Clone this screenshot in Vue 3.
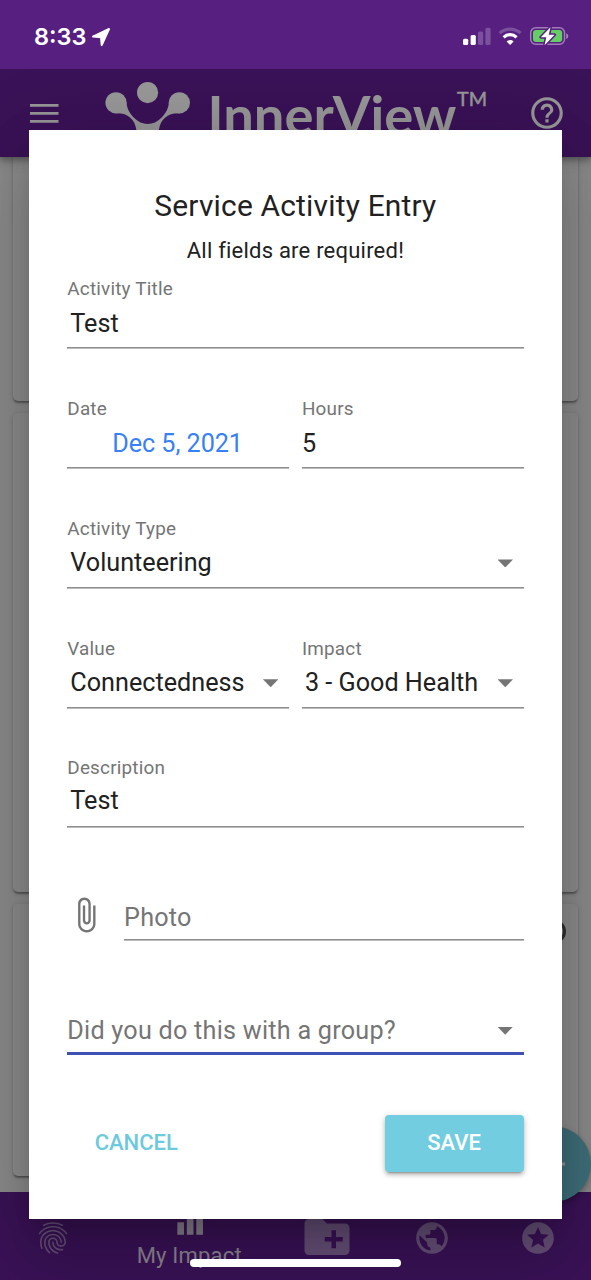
<script setup>
const tabs = [
  { id: 'me', size: 38, path: 'M17.81 4.47c-.08 0-.16-.02-.23-.06C15.66 3.42 14 3 12.01 3c-1.98 0-3.86.47-5.57 1.41-.24.13-.54.04-.68-.2-.13-.24-.04-.55.2-.68C7.82 2.52 9.86 2 12.01 2c2.13 0 3.99.47 6.03 1.52.25.13.34.43.21.67-.09.18-.26.28-.44.28zM3.5 9.72c-.1 0-.2-.03-.29-.09-.23-.16-.28-.47-.12-.7.99-1.4 2.25-2.5 3.75-3.27C9.98 4.04 14 4.03 17.15 5.65c1.5.77 2.76 1.86 3.75 3.25.16.22.11.54-.12.7-.23.16-.54.11-.7-.12-.9-1.26-2.04-2.25-3.39-2.94-2.87-1.47-6.54-1.47-9.4.01-1.36.7-2.5 1.7-3.4 2.96-.08.14-.23.21-.39.21zm6.25 12.07c-.13 0-.26-.05-.35-.15-.87-.87-1.34-1.43-2.01-2.64-.69-1.23-1.05-2.73-1.05-4.34 0-2.97 2.54-5.39 5.66-5.39s5.66 2.42 5.66 5.39c0 .28-.22.5-.5.5s-.5-.22-.5-.5c0-2.42-2.09-4.39-4.66-4.39-2.57 0-4.66 1.97-4.66 4.39 0 1.44.32 2.77.93 3.85.64 1.15 1.08 1.64 1.85 2.42.19.2.19.51 0 .71-.11.1-.24.15-.37.15zm7.17-1.85c-1.19 0-2.24-.3-3.1-.89-1.49-1.01-2.38-2.65-2.38-4.39 0-.28.22-.5.5-.5s.5.22.5.5c0 1.41.72 2.74 1.94 3.56.71.48 1.54.71 2.54.71.24 0 .64-.03 1.04-.1.27-.05.53.13.58.41.05.27-.13.53-.41.58-.57.11-1.07.12-1.21.12zM14.91 22c-.04 0-.09-.01-.13-.02-1.59-.44-2.63-1.03-3.72-2.1-1.4-1.39-2.17-3.24-2.17-5.22 0-1.62 1.38-2.94 3.08-2.94 1.7 0 3.08 1.32 3.08 2.94 0 1.07.93 1.94 2.08 1.94s2.08-.87 2.08-1.94c0-3.77-3.25-6.83-7.25-6.83-2.84 0-5.44 1.58-6.61 4.03-.39.81-.59 1.76-.59 2.8 0 .78.07 2.01.67 3.61.1.26-.03.55-.29.64-.26.1-.55-.04-.64-.29-.49-1.31-.73-2.61-.73-3.96 0-1.2.23-2.29.68-3.24 1.33-2.79 4.28-4.6 7.51-4.6 4.55 0 8.25 3.51 8.25 7.83 0 1.62-1.38 2.94-3.08 2.94s-3.08-1.32-3.08-2.94c0-1.07-.93-1.94-2.08-1.94s-2.08.87-2.08 1.94c0 1.71.66 3.31 1.87 4.51.95.94 1.86 1.46 3.27 1.85.27.07.42.35.35.61-.05.23-.26.38-.47.38z' },
  { id: 'impact', size: 38, label: 'My Impact', path: 'M4 12.2h4.2v7.8H4zM10 4h4.2v16H10zM16 8h4.2v12H16z' },
  { id: 'add', size: 54, path: 'M20 6h-8l-2-2H4c-1.11 0-1.99.89-1.99 2L2 18c0 1.11.89 2 2 2h16c1.11 0 2-.89 2-2V8c0-1.11-.89-2-2-2zm-1 8h-3v3h-2v-3h-3v-2h3V9h2v3h3v2z' },
  { id: 'world', size: 38, path: 'M12 2C6.48 2 2 6.48 2 12s4.48 10 10 10 10-4.48 10-10S17.52 2 12 2zm-1 17.93c-3.95-.49-7-3.85-7-7.93 0-.62.08-1.21.21-1.79L9 15v1c0 1.1.9 2 2 2v1.93zm6.9-2.54c-.26-.81-1-1.39-1.9-1.39h-1v-3c0-.55-.45-1-1-1H8v-2h2c.55 0 1-.45 1-1V7h2c1.1 0 2-.9 2-2v-.41c2.93 1.19 5 4.06 5 7.41 0 2.08-.8 3.97-2.1 5.39z' },
  { id: 'stars', size: 38, path: 'M11.99 2C6.47 2 2 6.48 2 12s4.47 10 9.99 10C17.52 22 22 17.52 22 12S17.52 2 11.99 2zm4.24 16L12 15.45 7.77 18l1.12-4.81-3.73-3.23 4.92-.42L12 5l1.92 4.53 4.92.42-3.73 3.23L16.23 18z' },
]
const rows = [
  [{ label: 'Activity Title', value: 'Test', kind: 'padded' }],
  [{ label: 'Date', value: 'Dec 5, 2021', kind: 'date' }, { label: 'Hours', value: '5', kind: 'plain' }],
  [{ label: 'Activity Type', value: 'Volunteering', kind: 'padded', select: true }],
  [{ label: 'Value', value: 'Connectedness', kind: 'padded', select: true }, { label: 'Impact', value: '3 - Good Health', kind: 'padded', select: true }],
  [{ label: 'Description', value: 'Test', kind: 'padded area' }],
]
</script>

<template>
  <div class="screen">
    <div class="status">
      <div class="time">
        <span>8:33</span>
        <svg width="20" height="20" viewBox="0 0 20 20"><path d="M18 2 10.700 18.200 10 10.200 2 9.600Z" fill="#fff" stroke="#fff" stroke-width="2" stroke-linejoin="round" /></svg>
      </div>
      <svg class="indicators" width="108" height="22" viewBox="462 26 108 22">
        <g fill="#fff">
          <rect x="463" y="38.7" width="5.2" height="6.3" rx="1.5" />
          <rect x="470.6" y="35" width="5.2" height="10" rx="1.5" />
          <rect x="478" y="31.5" width="5.2" height="13.5" rx="1.5" opacity=".22" />
          <rect x="485.4" y="27.8" width="5.2" height="17.2" rx="1.5" opacity=".22" />
        </g>
        <g fill="none" stroke="#fff" stroke-width="3.2">
          <path d="M499.6 33.2A15.4 15.4 0 0 1 520.6 33.2" opacity=".22" />
          <path d="M503.6 37.3A9.4 9.4 0 0 1 516.6 37.3" />
        </g>
        <path d="M510.1 45 506.6 41.4A5 5 0 0 1 513.6 41.4Z" fill="#fff" />
        <rect x="530.7" y="27.7" width="33.8" height="16.6" rx="5" fill="none" stroke="#fff" stroke-opacity=".42" stroke-width="1.5" />
        <path d="M566.2 33.2c2.7.8 2.7 5 0 5.8z" fill="#fff" opacity=".45" />
        <rect x="533" y="30" width="29.2" height="12" rx="3" fill="#64ce65" />
        <path d="M550.5 27.2 540.8 37.2H546.3L544.6 45.2 554.6 34.8H548.8Z" fill="#fff" stroke="#561f80" stroke-width="3" paint-order="stroke" stroke-linejoin="round" />
      </svg>
    </div>

    <header class="appbar">
      <svg class="menu" width="29" height="20" viewBox="0 0 29 20"><path d="M0 2.300h28.5M0 10.300h28.5M0 18.300h28.5" stroke="#979797" stroke-width="2.8" /></svg>
      <svg class="brand" width="400" height="88" viewBox="100 69 400 88">
        <g fill="#979797">
          <circle cx="116" cy="102.8" r="10.6" />
          <circle cx="147.6" cy="92.6" r="10.6" />
          <circle cx="179.4" cy="102.8" r="10.6" />
          <path d="M126.5 102C126.800 109 130 113.500 134 117.800Q140 124 147.700 124Q155.400 124 161.400 117.800C165.400 113.500 168.600 109 168.900 102L180 113.400C168 112.800 160.500 119 158.900 130V145H136.400V130C134.800 119 127.500 112.800 115.500 113.400Z" />
          <text x="207.500" y="134.500" class="brand-name" textLength="249" lengthAdjust="spacingAndGlyphs">InnerView</text>
          <text x="457" y="105.500" class="brand-mark" textLength="30" lengthAdjust="spacingAndGlyphs">TM</text>
        </g>
      </svg>
      <svg class="help" width="38" height="38" viewBox="0 0 24 24"><path fill="#979797" d="M11 18h2v-2h-2v2zm1-16C6.480 2 2 6.480 2 12s4.480 10 10 10 10-4.480 10-10S17.520 2 12 2zm0 18c-4.410 0-8-3.590-8-8s3.590-8 8-8 8 3.590 8 8-3.590 8-8 8zm0-14c-2.210 0-4 1.790-4 4h2c0-1.100.900-2 2-2s2 .900 2 2c0 2-3 1.750-3 5h2c0-2.250 3-2.500 3-5 0-2.210-1.790-4-4-4z" /></svg>
    </header>

    <main class="feed">
      <div class="card first"></div>
      <div class="card second"></div>
      <div class="card third"><span class="ring"></span></div>
    </main>

    <nav class="tabs">
      <div v-for="tab in tabs" :key="tab.id" class="tab" :class="tab.id">
        <svg :width="tab.size" :height="tab.size" viewBox="0 0 24 24"><path :d="tab.path" /></svg>
        <span v-if="tab.label">{{ tab.label }}</span>
      </div>
    </nav>
    <div class="fab"><svg width="24" height="24" viewBox="0 0 24 24"><path d="M0 12h24M12 0v24" stroke="#979797" stroke-width="3" /></svg></div>

    <div class="overlay">
      <section class="dialog">
        <h2>Service Activity Entry</h2>
        <p class="note">All fields are required!</p>
        <div class="form">
          <div v-for="(row, i) in rows" :key="i" class="row">
            <div v-for="field in row" :key="field.label" class="field" :class="field.kind">
              <label>{{ field.label }}</label>
              <div class="value">
                <span>{{ field.value }}</span>
                <i v-if="field.select" class="caret"></i>
              </div>
            </div>
          </div>
        </div>
        <div class="photo">
          <svg width="38" height="38" viewBox="0 0 24 24"><path fill="#757575" d="M16.5 6v11.5c0 2.21-1.79 4-4 4s-4-1.79-4-4V5c0-1.38 1.12-2.5 2.5-2.5s2.5 1.12 2.5 2.500v10.500c0 .55-.45 1-1 1s-1-.45-1-1V6H10v9.500c0 1.380 1.120 2.500 2.500 2.500s2.500-1.120 2.500-2.500V5c0-2.210-1.790-4-4-4S7 2.790 7 5v12.500c0 3.040 2.460 5.500 5.500 5.500s5.500-2.460 5.500-5.500V6h-1.500z" /></svg>
          <div class="photo-input">Photo</div>
        </div>
        <div class="group"><span>Did you do this with a group?</span><i class="caret"></i></div>
        <div class="actions">
          <button class="cancel">CANCEL</button>
          <button class="save">SAVE</button>
        </div>
      </section>
    </div>
    <div class="home-indicator"></div>
  </div>
</template>

<style>
body { margin: 0; }
</style>

<style scoped>
.screen { position: relative; width: 591px; height: 1280px; overflow: hidden; display: flex; flex-direction: column; background: #8c8c8c; font-family: Roboto, "Liberation Sans", sans-serif; }
.screen * { box-sizing: border-box; }
.status { position: relative; z-index: 4; height: 69px; flex: none; display: flex; justify-content: space-between; align-items: flex-start; padding: 26px 21px 0 34px; background: #561f80; }
.time { display: flex; align-items: center; gap: 5px; height: 22px; color: #fff; font: 600 23.5px/22px Inter, sans-serif; letter-spacing: 0; }
.appbar { position: relative; z-index: 1; height: 88px; flex: none; display: flex; align-items: center; background: #3a1257; box-shadow: 0 3px 6px rgba(0,0,0,.3), 0 6px 12px rgba(0,0,0,.12); }
.menu { margin-left: 30px; }
.brand { margin-left: 41px; }
.brand-name { font: 700 53px Lato, sans-serif; }
.brand-mark { font: 400 19px Lato, sans-serif; stroke: #979797; stroke-width: .5; }
.help { margin-left: 28px; }
.feed { height: 1034.500px; flex: none; padding: 0 13px; overflow: hidden; display: flex; flex-direction: column; gap: 12px; }
.card { flex: none; border-radius: 5px; background: #8e8e8e; box-shadow: 0 3px 2px -1px rgba(0,0,0,.25), 0 1px 2px rgba(0,0,0,.18), 0 1px 5px rgba(0,0,0,.1); }
.first { height: 244px; border-radius: 0 0 5px 5px; }
.second { height: 479px; }
.third { height: 272px; display: flex; justify-content: flex-end; padding: 15px 12px 0; }
.ring { width: 25px; height: 25px; border: 3px solid #303030; border-radius: 50%; }
.tabs { height: 89px; flex: none; display: grid; grid-template-columns: 105.5px 168.500px 105.5px 105.5px 105.5px; background: #3a1257; }
.tab { display: flex; flex-direction: column; align-items: center; padding-top: 27px; fill: #675078; }
.tab.add { padding-top: 18.500px; }
.tab.impact { padding-top: 11px; fill: #8a8290; }
.tab span { margin: 2px 1px 0 0; color: #8c8492; font-size: 22px; line-height: 26px; letter-spacing: .2px; white-space: nowrap; }
.fab { position: absolute; left: 515px; top: 1126px; width: 76px; height: 76px; border-radius: 50%; background: #3f707b; display: flex; align-items: center; justify-content: center; box-shadow: 0 3px 6px rgba(0,0,0,.3); }
.overlay { position: absolute; z-index: 3; inset: 129.500px 29.500px 60.700px 29.300px; display: flex; }
.dialog { flex: 1; min-width: 0; padding: 59.500px 38px 0; background: #fff; color: #212121; box-shadow: 0 17px 24px -11px rgba(0,0,0,.2), 0 38px 60px 5px rgba(0,0,0,.14), 0 14px 72px 13px rgba(0,0,0,.12); }
h2 { margin: 0; text-align: center; font-size: 29.900px; line-height: 33px; font-weight: 400; letter-spacing: .2px; }
.note { margin: 14.500px 0 0; text-align: center; font-size: 22px; line-height: 27px; letter-spacing: .22px; }
.form { display: flex; flex-direction: column; gap: 46.800px; padding-top: 12.700px; }
.row { display: flex; gap: 13px; }
.field { flex: 1 1 0; min-width: 0; height: 73px; background: linear-gradient(#8e8e8e, #8e8e8e) 0 71px / 100% 1.600px no-repeat; }
label { display: block; height: 24px; padding-top: 1.100px; font-size: 18.900px; line-height: 24px; letter-spacing: .2px; color: #757575; white-space: nowrap; }
.value { display: flex; align-items: center; justify-content: space-between; height: 30px; margin-top: 8.700px; font-size: 25.200px; line-height: 30px; letter-spacing: 0; white-space: nowrap; }
.padded .value { padding-left: 3px; }
.date .value { justify-content: center; color: #3880f6; padding-right: 1px; letter-spacing: -.05px; }
.area .value { margin-top: 6.700px; }
.caret { flex: none; width: 15.500px; height: 8px; margin-right: 10.500px; background: #757575; clip-path: polygon(0 0, 100% 0, 50% 100%); }
.photo { display: flex; align-items: flex-start; margin-top: 67.800px; height: 45px; margin-left: -.8px; }
.photo-input { flex: 1; margin-left: 19.500px; height: 45px; padding-top: 6.500px; background: linear-gradient(#8e8e8e, #8e8e8e) 0 43.300px / 100% 1.600px no-repeat; font-size: 25.200px; line-height: 30px; letter-spacing: .24px; color: #757575; }
.group { display: flex; justify-content: space-between; align-items: center; margin-top: 74.500px; height: 39px; padding-bottom: 6px; border-bottom: 3px solid #3f51b5; color: #757575; font-size: 25.200px; line-height: 30px; letter-spacing: .24px; }
.actions { display: flex; justify-content: space-between; margin-top: 60.500px; }
button { height: 57px; padding: 0 0 1.500px; border: 0; border-radius: 4px; font: 500 22px/54px Roboto, sans-serif; }
.cancel { width: 138px; background: none; color: #6dcade; }
.save { width: 139px; background: #72cde0; color: #fff; box-shadow: 0 4px 2px -3px rgba(0,0,0,.25), 0 3px 4px rgba(0,0,0,.2), 0 1px 8px rgba(0,0,0,.12); }
.home-indicator { position: absolute; z-index: 5; left: 190px; top: 1259px; width: 211px; height: 8px; border-radius: 4px; background: #fff; }
</style>
